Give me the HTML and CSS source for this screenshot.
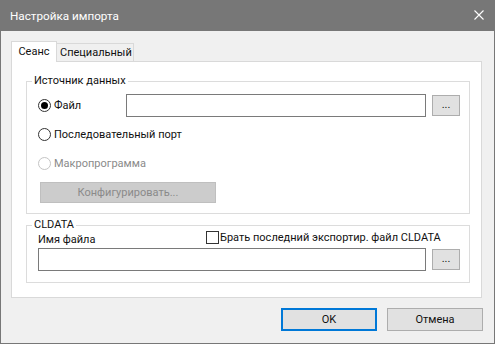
FILE: index.html
```html
<!DOCTYPE html>
<html lang="ru">
<head>
<meta charset="utf-8">
<title>Настройка импорта</title>
<link rel="stylesheet" href="styles.css">
</head>
<body>
<div class="window">
  <div class="titlebar">
    <span class="title">Настройка импорта</span>
    <svg class="close" width="10" height="10" viewBox="0 0 10 10"><path d="M0.5 0.5 L9.5 9.5 M9.5 0.5 L0.5 9.5" stroke="#fff" stroke-width="1.1" fill="none"/></svg>
  </div>
  <div class="content">
    <div class="tabs">
      <div class="tab active">Сеанс</div>
      <div class="tab">Специальный</div>
    </div>
    <div class="panel">
      <div class="group g1">
        <span class="legend">Источник данных</span>
        <div class="row r1">
          <label class="radio-wrap"><span class="radio checked"></span><span>Файл</span></label>
          <div class="field"></div>
          <div class="btn small">...</div>
        </div>
        <div class="row r2">
          <label class="radio-wrap"><span class="radio"></span><span>Последовательный порт</span></label>
        </div>
        <div class="row r2 disabled">
          <label class="radio-wrap"><span class="radio"></span><span>Макропрограмма</span></label>
        </div>
        <div class="btn config">Конфигурировать...</div>
      </div>
      <div class="group g2">
        <span class="legend">CLDATA</span>
        <div class="row labels">
          <span class="fname">Имя файла</span>
          <label class="check-wrap"><span class="check"></span><span>Брать последний экспортир. файл CLDATA</span></label>
        </div>
        <div class="row r3">
          <div class="field wide"></div>
          <div class="btn small">...</div>
        </div>
      </div>
    </div>
    <div class="footer">
      <div class="btn dlg default">OK</div>
      <div class="btn dlg">Отмена</div>
    </div>
  </div>
</div>
</body>
</html>
```

FILE: styles.css
```css
* { box-sizing: border-box; }
html, body { margin: 0; padding: 0; }
body {
  font-family: Roboto, "Noto Sans", sans-serif;
  font-size: 11px;
  color: #111;
  background: #f0f0f0;
}
.window {
  width: 495px;
  height: 344px;
  border: 1px solid #777;
  background: #f0f0f0;
  display: flex;
  flex-direction: column;
}
.titlebar {
  height: 30px;
  background: #777;
  color: #fff;
  display: flex;
  align-items: center;
  justify-content: space-between;
  padding: 0 10px 1px 9px;
}
.title { font-size: 11.7px; }
.close { display: block; margin-top: -1px; }
.content {
  padding: 10px 11px 0 10px;
  display: flex;
  flex-direction: column;
}
.tabs {
  display: flex;
  align-items: flex-end;
  height: 20px;
}
.tab {
  border: 1px solid #d9d9d9;
  border-bottom: none;
  height: 18px;
  line-height: 18px;
  padding: 0 3px;
  background: #f0f0f0;
  margin-left: -1px;
  width: 78px;
  text-align: center;
}
.tab.active {
  width: 46px;
  margin-left: 0;
  height: 21px;
  margin-bottom: -1px;
  background: #fff;
  position: relative;
  z-index: 1;
  line-height: 19px;
}
.panel {
  width: 471px;
  height: 237px;
  border: 1px solid #d9d9d9;
  background: #fff;
  padding: 19px 0 0 14px;
}
.group {
  position: relative;
  width: 444px;
  border: 1px solid #dcdcdc;
}
.g1 { height: 133px; padding: 12px 0 0 11px; }
.g2 { height: 58px; margin-top: 11px; padding: 3px 0 0 11px; }
.legend {
  position: absolute;
  top: -9px;
  left: 5px;
  padding: 0 2px;
  background: #fff;
  line-height: 16px;
}
.row { display: flex; align-items: center; height: 23px; }
.r2 { margin-top: 6px; }
.radio-wrap { display: flex; align-items: center; width: 88px; white-space: nowrap; }
.radio {
  width: 13px; height: 13px;
  border: 1px solid #333;
  border-radius: 50%;
  margin-right: 3px;
  flex: none;
  display: flex; align-items: center; justify-content: center;
}
.radio.checked::after {
  content: "";
  width: 7px; height: 7px;
  border-radius: 50%;
  background: #000;
}
.disabled { color: #8a8a8a; }
.disabled .radio { border-color: #c4c4c4; }
.field {
  width: 300px;
  height: 23px;
  border: 1px solid #7a7a7a;
  background: #fff;
}
.field.wide { width: 388px; }
.btn {
  background: #e1e1e1;
  border: 1px solid #adadad;
  display: flex;
  align-items: center;
  justify-content: center;
  color: #111;
}
.small { width: 28px; height: 21px; margin-left: 6px; padding-bottom: 2px; }
.config {
  width: 176px;
  height: 21px;
  margin: 7px 0 0 2px;
  background: #cccccc;
  border-color: #bfbfbf;
  color: #8a8a8a;
}
.labels { height: 16px; align-items: center; }
.fname { width: 168px; padding-top: 6px; line-height: 14px; }
.check-wrap { display: flex; align-items: center; white-space: nowrap; }
.check {
  width: 13px; height: 13px;
  border: 1px solid #333;
  background: #fff;
  margin-right: 1px;
  flex: none;
}
.r3 { margin-top: 3px; }
.footer {
  display: flex;
  justify-content: flex-end;
  gap: 10px;
  margin-top: 10px;
}
.dlg { width: 96px; height: 23px; }
.dlg.default { border: 2px solid #0078d7; }
```
